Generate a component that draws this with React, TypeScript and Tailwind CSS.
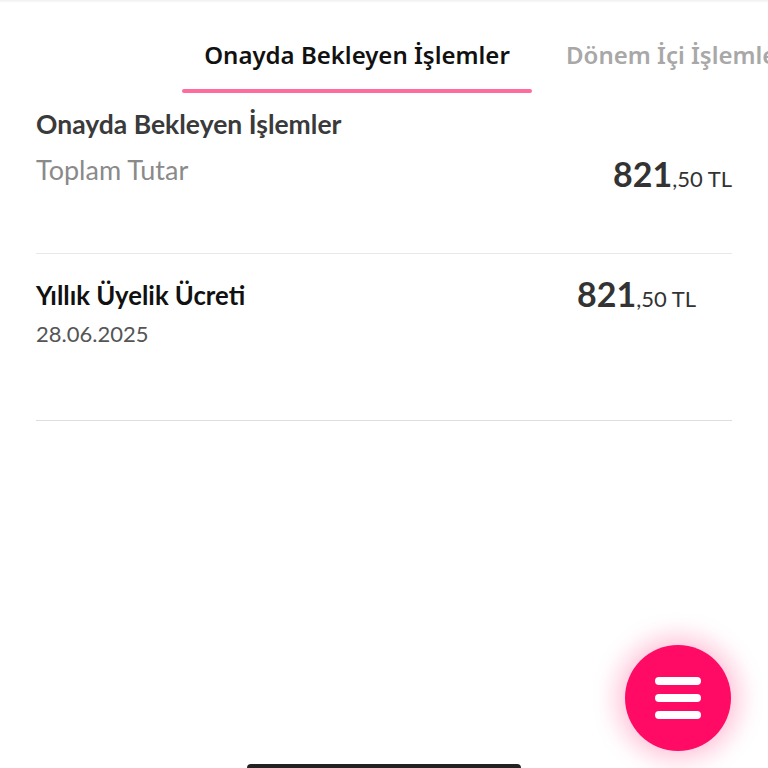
import React from "react";

const Amount: React.FC<{ whole: string; frac: string }> = ({ whole, frac }) => (
  <div className="flex items-baseline text-[#333]">
    <span className="text-[34px] font-bold leading-none">{whole}</span>
    <span className="text-[22px] leading-none">,{frac} TL</span>
  </div>
);

export default function App() {
  const tabs = ["Onayda Bekleyen İşlemler", "Dönem İçi İşlemler"];
  return (
    <div className="relative h-[768px] w-[768px] overflow-hidden bg-white" style={{ fontFamily: "Lato, 'Noto Sans', sans-serif" }}>
      <div className="h-[3px] w-full bg-gradient-to-b from-[#f0f0f0] to-white" />
      <div className="flex h-[90px] overflow-hidden whitespace-nowrap pl-[182px]" style={{ fontFamily: "'Noto Sans', sans-serif" }}>
        {tabs.map((t, i) => (
          <div key={t} className={`flex h-full shrink-0 flex-col justify-end ${i === 0 ? "w-[350px]" : "ml-[12px]"}`}>
            <div className={`flex flex-1 items-center px-[22px] pt-[18px] text-[24px] font-semibold ${i === 0 ? "justify-center text-[#111]" : "text-[#a8a8a8]"}`}>
              {t}
            </div>
            <div className={`h-[4px] rounded-full ${i === 0 ? "bg-[#ff6b9c]" : "bg-transparent"}`} />
          </div>
        ))}
      </div>

      <div className="px-[36px]">
        <div className="border-b border-[#e6e8ea] pb-[62px] pt-[15px]">
          <div className="text-[26.5px] font-bold leading-[32px] text-[#3a3a3a]">Onayda Bekleyen İşlemler</div>
          <div className="mt-[16px] flex items-start justify-between">
            <div className="text-[27px] leading-[28px] text-[#8a8a8a]">Toplam Tutar</div>
            <div className="mt-[1px]">
              <Amount whole="821" frac="50" />
            </div>
          </div>
        </div>

        <div className="flex items-start justify-between border-b border-[#dedede] pb-[73px] pt-[25px]">
          <div>
            <div className="text-[25.7px] font-bold leading-[32px] text-[#111]">Yıllık Üyelik Ücreti</div>
            <div className="mt-[10px] text-[22px] leading-[26px] text-[#555]">28.06.2025</div>
          </div>
          <div className="mr-[36px] mt-[-2px]">
            <Amount whole="821" frac="50" />
          </div>
        </div>
      </div>

      <button className="absolute left-[625px] top-[645px] flex h-[106px] w-[106px] flex-col items-center justify-center gap-[9px] rounded-full bg-[#ff0a64] shadow-[0_0_24px_8px_rgba(255,10,100,0.25)]">
        <span className="h-[8px] w-[46px] rounded-full bg-white" />
        <span className="h-[8px] w-[46px] rounded-full bg-white" />
        <span className="h-[8px] w-[46px] rounded-full bg-white" />
      </button>

      <div className="absolute bottom-0 left-[247px] h-[4px] w-[274px] rounded-t-full bg-[#222]" />
    </div>
  );
}
